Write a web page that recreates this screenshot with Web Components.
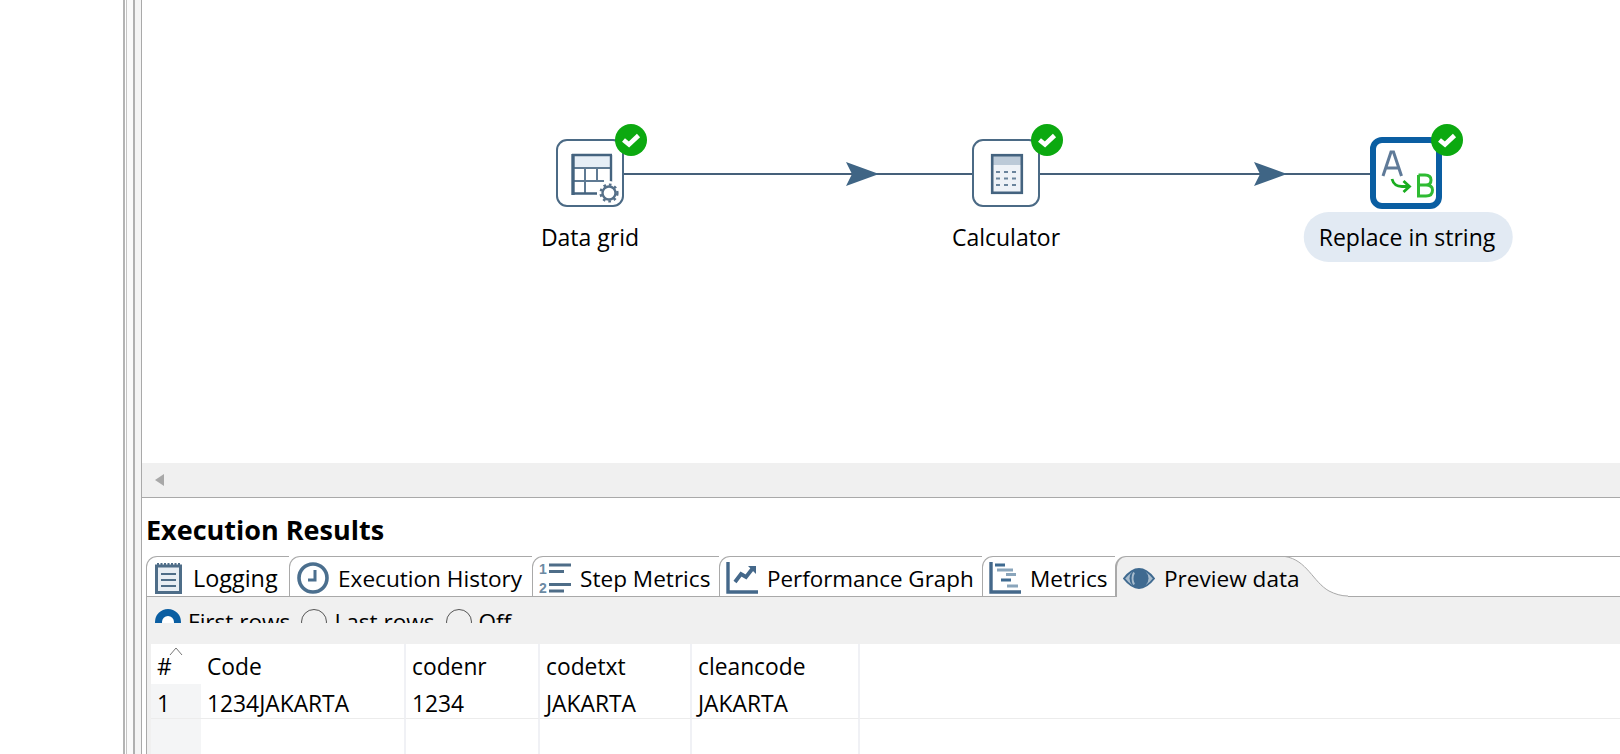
<!DOCTYPE html>
<html>
<head>
<meta charset="utf-8">
<style>
  html, body { margin: 0; height: 100%; background: #fff; overflow: hidden; }
  body { font-family: "Open Sans", "Noto Sans", sans-serif; color: #000; }
</style>
</head>
<body>
<app-shell>
  <flow-canvas slot="canvas">
    <flow-hop x1="482" x2="831" tip="737"></flow-hop>
    <flow-hop x1="898" x2="1229" tip="1145"></flow-hop>
    <flow-node x="414" y="139" label="Data grid" icon="grid"></flow-node>
    <flow-node x="830" y="139" label="Calculator" icon="calc"></flow-node>
    <flow-node x="1228" y="137" label="Replace in string" icon="replace" selected></flow-node>
  </flow-canvas>
  <results-panel slot="results"></results-panel>
</app-shell>

<script>
const ICONS = {
  grid: `<svg width="60" height="60" viewBox="0 0 60 60">
      <rect x="13" y="12" width="38" height="12" fill="#e6eef6"/>
      <path d="M25 24V50M37 24V39M13 25H51M13 38H44" fill="none" stroke="#5f7a93" stroke-width="2"/>
      <path d="M13 50.500H37M51 12V40M12 12H52" fill="none" stroke="#44637f" stroke-width="2.400"/>
      <path d="M13 11V52" stroke="#44637f" stroke-width="3.400"/>
      <circle cx="49" cy="50" r="12" fill="#fff"/>
      <circle cx="49" cy="50" r="6.500" fill="#fff" stroke="#567089" stroke-width="2.400"/>
      <circle cx="49" cy="50" r="8.400" fill="none" stroke="#567089" stroke-width="2.400" stroke-dasharray="2.600 3"/>
    </svg>`,
  calc: `<svg width="60" height="60" viewBox="0 0 60 60">
      <rect x="15" y="11" width="32" height="40" fill="#eef2f7"/>
      <rect x="15" y="13" width="32" height="9" fill="#bccad8"/>
      <rect x="16.200" y="12.200" width="29.600" height="37.600" fill="none" stroke="#44637f" stroke-width="2.600"/>
      <path d="M20 29H42M20 35.500H42M20 42H42" stroke="#6a849c" stroke-width="2" stroke-dasharray="4 4"/>
    </svg>`,
  replace: `<svg width="60" height="60" viewBox="0 0 60 60">
      <path d="M7 33L15 9H17.500L25.500 33M10 25H22.500" fill="none" stroke="#5f7a98" stroke-width="3"/>
      <path d="M42.500 32V53H50Q56.500 53 56.500 47Q56.500 42 50 42H42.500M50 42Q55 42 55 37Q55 32 49 32H42.500" fill="none" stroke="#2fbb33" stroke-width="3"/>
      <path d="M16 36Q18 43.500 26 43.500H33M27.500 38L33.500 43.500L27.500 49" fill="none" stroke="#19ad1f" stroke-width="2.800"/>
    </svg>`
};

class FlowNode extends HTMLElement {
  constructor() {
    super();
    const x = +this.getAttribute("x");
    const y = +this.getAttribute("y");
    const selected = this.hasAttribute("selected");
    this.attachShadow({ mode: "open" });
    this.shadowRoot.innerHTML = `
      <style>
        :host { position: absolute; left: ${x}px; top: ${y}px; width: ${selected ? 72 : 68}px; height: ${selected ? 72 : 68}px; }
        .box {
          box-sizing: border-box; width: 100%; height: 100%; background: #fff;
          border: ${selected ? "6px solid #0a5ea2" : "2px solid #4b6a85"};
          border-radius: ${selected ? 12 : 11}px;
          display: flex; align-items: center; justify-content: center;
        }
        .check { position: absolute; right: ${selected ? -21 : -23}px; top: ${selected ? -13 : -15}px; width: 32px; height: 32px; }
        .label {
          position: absolute; top: ${selected ? 75 : 82}px; left: 50%;
          transform: translateX(${selected ? "calc(-50% + 2px)" : "-50%"});
          white-space: nowrap; font-size: 23px; line-height: 32px;
          padding: ${selected ? "9px 17px 9px 15px" : "0"}; border-radius: 25px;
          background: ${selected ? "#e2eaf3" : "transparent"};
        }
      </style>
      <div class="box">${ICONS[this.getAttribute("icon")]}</div>
      <svg class="check" viewBox="0 0 32 32">
        <circle cx="16" cy="16" r="16" fill="#0ca910"/>
        <path d="M8.500 16L14 20.500L23.500 11.500" fill="none" stroke="#fff" stroke-width="4.600"/>
      </svg>
      <div class="label">${this.getAttribute("label")}</div>`;
  }
}
customElements.define("flow-node", FlowNode);

class FlowHop extends HTMLElement {
  constructor() {
    super();
    const x1 = +this.getAttribute("x1");
    const x2 = +this.getAttribute("x2");
    const tip = +this.getAttribute("tip");
    this.attachShadow({ mode: "open" });
    this.shadowRoot.innerHTML = `
      <style>:host { position: absolute; left: 0; top: 0; }</style>
      <svg width="1478" height="300" style="display:block">
        <path d="M${x1} 174H${x2}" stroke="#45607a" stroke-width="2"/>
        <path d="M${tip - 33} 162L${tip} 174L${tip - 33} 186L${tip - 27} 174Z" fill="#3f6585"/>
      </svg>`;
  }
}
customElements.define("flow-hop", FlowHop);

class FlowCanvas extends HTMLElement {
  constructor() {
    super();
    this.attachShadow({ mode: "open" });
    this.shadowRoot.innerHTML = `
      <style>
        :host { display: flex; flex-direction: column; height: 498px; box-sizing: border-box; border-bottom: 1px solid #a9a9a9; flex: none; }
        .area { flex: 1; overflow: hidden; }
        .scroll { height: 34px; background: #f0f0f0; display: flex; align-items: center; padding-left: 13px; }
        .left { width: 0; height: 0; border: 6px solid transparent; border-left: 0; border-right: 9px solid #a8a8a8; }
      </style>
      <div class="area"><slot></slot></div>
      <div class="scroll"><div class="left"></div></div>`;
  }
}
customElements.define("flow-canvas", FlowCanvas);

const TAB_ICONS = {
  log: `<svg width="27" height="31" viewBox="0 0 27 31">
      <path d="M1.500 3H25.500V29.500H1.500Z" fill="#e8eef4" stroke="#4e6d88" stroke-width="3"/>
      <path d="M2 2H25" stroke="#4e6d88" stroke-width="4" stroke-dasharray="2 1.500"/>
      <path d="M6 11H21M6 17H21M6 23H21" stroke="#4e6d88" stroke-width="2"/>
    </svg>`,
  clock: `<svg width="32" height="32" viewBox="0 0 32 32">
      <circle cx="16" cy="16" r="14" fill="#fff" stroke="#4b6f8e" stroke-width="3.600"/>
      <path d="M18 8V18H11" fill="none" stroke="#4b6f8e" stroke-width="3"/>
    </svg>`,
  steps: `<svg width="32" height="32" viewBox="0 0 32 32" font-family="Liberation Sans, sans-serif" font-weight="700" font-size="14" fill="#6c8aa3">
      <text x="0" y="12">1</text><text x="0" y="31">2</text>
      <path d="M10 3H32M10 9.500H25M10 22.500H32M10 29H25" stroke="#4e6d88" stroke-width="2.800"/>
    </svg>`,
  perf: `<svg width="32" height="32" viewBox="0 0 32 32">
      <path d="M2 0V30H32" fill="none" stroke="#44688a" stroke-width="3.400"/>
      <path d="M9 20L15 12L20 15L27 6" fill="none" stroke="#44688a" stroke-width="3.800"/>
      <path d="M22 4H30V12Z" fill="#44688a"/>
    </svg>`,
  metrics: `<svg width="32" height="32" viewBox="0 0 32 32">
      <path d="M2 0V30H32" fill="none" stroke="#44688a" stroke-width="3.400"/>
      <path d="M6 3H16M12 18H22" stroke="#3f6a90" stroke-width="3.200"/>
      <path d="M8 8H24M17 12.500H27M18 24H29" stroke="#8aa5bb" stroke-width="3.200"/>
    </svg>`,
  eye: `<svg width="32" height="23" viewBox="0 0 32 23">
      <path d="M1 11.500Q16 -7.500 31 11.500Q16 30.500 1 11.500Z" fill="#a8bccd" stroke="#3f6a90" stroke-width="2"/>
      <circle cx="16" cy="11.500" r="9.500" fill="#3f6a90"/>
      <path d="M11 5.500Q8 11.500 11 17.500" fill="none" stroke="#a8bccd" stroke-width="2"/>
    </svg>`
};

class ResultTab extends HTMLElement {
  constructor() {
    super();
    const active = this.hasAttribute("active");
    this.attachShadow({ mode: "open" });
    this.shadowRoot.innerHTML = `
      <style>
        :host {
          display: flex; align-items: center; flex: none; position: relative; box-sizing: border-box;
          gap: ${this.getAttribute("gap") || 9}px;
          width: ${this.getAttribute("w")}px; height: 41px; padding: 3px 0 0 ${this.getAttribute("pad") || 7}px;
          font-size: 22.6px; white-space: nowrap;
          border-top: 1px solid #a9a9a9; border-left: ${active ? 2 : 1}px solid #a9a9a9; border-top-left-radius: 11px;
          border-bottom: ${active ? "0" : "1px solid #a9a9a9"};
          background: ${active ? "#f0f0f0" : "#fff"};
        }
        .curve { position: absolute; left: 100%; top: -1px; width: 63px; height: 41px; }
        .ic { display: flex; }
        .txt { position: relative; z-index: 1; }
      </style>
      <span class="ic">${TAB_ICONS[this.getAttribute("icon")]}</span>
      <span class="txt"><slot></slot></span>
      ${active ? `<svg class="curve" viewBox="0 0 63 41"><path d="M0 1C22 4 28 26 44 35C50 38 56 40 63 40V41H0Z" fill="#f0f0f0"/><path d="M0 .5C22 4 28 26 44 35C50 38 56 40 63 40" fill="none" stroke="#a9a9a9"/></svg>` : ""}`;
  }
}
customElements.define("result-tab", ResultTab);

class RadioOption extends HTMLElement {
  constructor() {
    super();
    const on = this.hasAttribute("checked");
    this.attachShadow({ mode: "open" });
    this.shadowRoot.innerHTML = `
      <style>
        :host { display: inline-flex; align-items: center; gap: 7px; font-size: 22.6px; line-height: 26px; height: 26px; flex: none; }
        .dot { width: 26px; height: 26px; box-sizing: border-box; border-radius: 50%; background: ${on ? "#fff" : "transparent"}; border: ${on ? "7px solid #0a5ea2" : "1px solid #555"}; }
      </style>
      <span class="dot"></span><slot></slot>`;
  }
}
customElements.define("radio-option", RadioOption);

class PreviewTable extends HTMLElement {
  constructor() {
    super();
    const cols = ["Code", "codenr", "codetxt", "cleancode"];
    const row = ["1234JAKARTA", "1234", "JAKARTA", "JAKARTA"];
    this.attachShadow({ mode: "open" });
    this.shadowRoot.innerHTML = `
      <style>
        :host { display: grid; grid-template-columns: 50px 205px 134px 152px 168px 1fr; grid-template-rows: 40px 35px 1fr; flex: 1; margin-left: 4px; font-size: 22.8px; background: #fff; }
        div { box-sizing: border-box; padding: 5px 0 0 6px; display: flex; align-items: center; border-right: 2px solid #f0f1f5; white-space: nowrap; position: relative; }
        .r { border-bottom: 1px solid #ececec; }
        .n { background: #f4f5f6; padding-left: 6px; border-right: 0; }
        .corner { border-right: 0; padding-left: 6px; }
        .sort { position: absolute; left: 18px; top: 3px; }
        .last { border-right: 0; }
      </style>
      <div class="corner">#<svg class="sort" width="14" height="9" viewBox="0 0 14 9"><path d="M1 8L7 1L13 8" fill="none" stroke="#777"/></svg></div>
      ${cols.map(c => `<div>${c}</div>`).join("")}<div class="last"></div>
      <div class="n r">1</div>
      ${row.map(c => `<div class="r">${c}</div>`).join("")}<div class="r last"></div>
      <div class="n"></div><div></div><div></div><div></div><div></div><div class="last"></div>`;
  }
}
customElements.define("preview-table", PreviewTable);

class ResultsPanel extends HTMLElement {
  constructor() {
    super();
    this.attachShadow({ mode: "open" });
    this.shadowRoot.innerHTML = `
      <style>
        :host { display: flex; flex-direction: column; flex: 1; min-height: 0; padding-left: 4px; }
        h2 { margin: 0; font-size: 27px; line-height: 36px; font-weight: 700; padding-top: 14px; height: 58px; box-sizing: border-box; flex: none; }
        .tabs { display: flex; height: 41px; flex: none; }
        .rest { flex: 1; border-top: 1px solid #a9a9a9; border-bottom: 1px solid #a9a9a9; }
        .body { flex: 1; display: flex; flex-direction: column; background: #f0f0f0; min-height: 0; border-left: 1px solid #a9a9a9; }
        .radios { height: 47px; box-sizing: border-box; padding: 12px 0 0 8px; flex: none; }
        .clip { height: 14px; overflow: hidden; display: flex; align-items: flex-start; gap: 11px; }
      </style>
      <h2>Execution Results</h2>
      <div class="tabs">
        <result-tab icon="log" w="143" pad="8" gap="11" style="font-size:23.4px">Logging</result-tab>
        <result-tab icon="clock" w="243">Execution History</result-tab>
        <result-tab icon="steps" w="187" pad="6">Step Metrics</result-tab>
        <result-tab icon="perf" w="263" pad="6" style="font-size:22.4px">Performance Graph</result-tab>
        <result-tab icon="metrics" w="133" pad="6">Metrics</result-tab>
        <result-tab icon="eye" w="170" pad="6" active>Preview data</result-tab>
        <div class="rest"></div>
      </div>
      <div class="body">
        <div class="radios"><div class="clip">
          <radio-option checked>First rows</radio-option>
          <radio-option>Last rows</radio-option>
          <radio-option>Off</radio-option>
        </div></div>
        <preview-table></preview-table>
      </div>`;
  }
}
customElements.define("results-panel", ResultsPanel);

class AppShell extends HTMLElement {
  constructor() {
    super();
    this.attachShadow({ mode: "open" });
    this.shadowRoot.innerHTML = `
      <style>
        :host { display: grid; grid-template-columns: 123px 18px 1fr; height: 754px; overflow: hidden; }
        .sash { background: linear-gradient(90deg, #b4b4b4 0 2px, #fff 2px 3px, #c4c4c4 3px 4px, #fafafa 4px 10px, #b0b0b0 10px 12px, #f4f4f4 12px); }
        .main { display: flex; flex-direction: column; min-width: 0; position: relative; border-left: 1px solid #a9a9a9; }
      </style>
      <div></div>
      <div class="sash"></div>
      <div class="main"><slot name="canvas"></slot><slot name="results"></slot></div>`;
  }
}
customElements.define("app-shell", AppShell);
</script>
</body>
</html>
